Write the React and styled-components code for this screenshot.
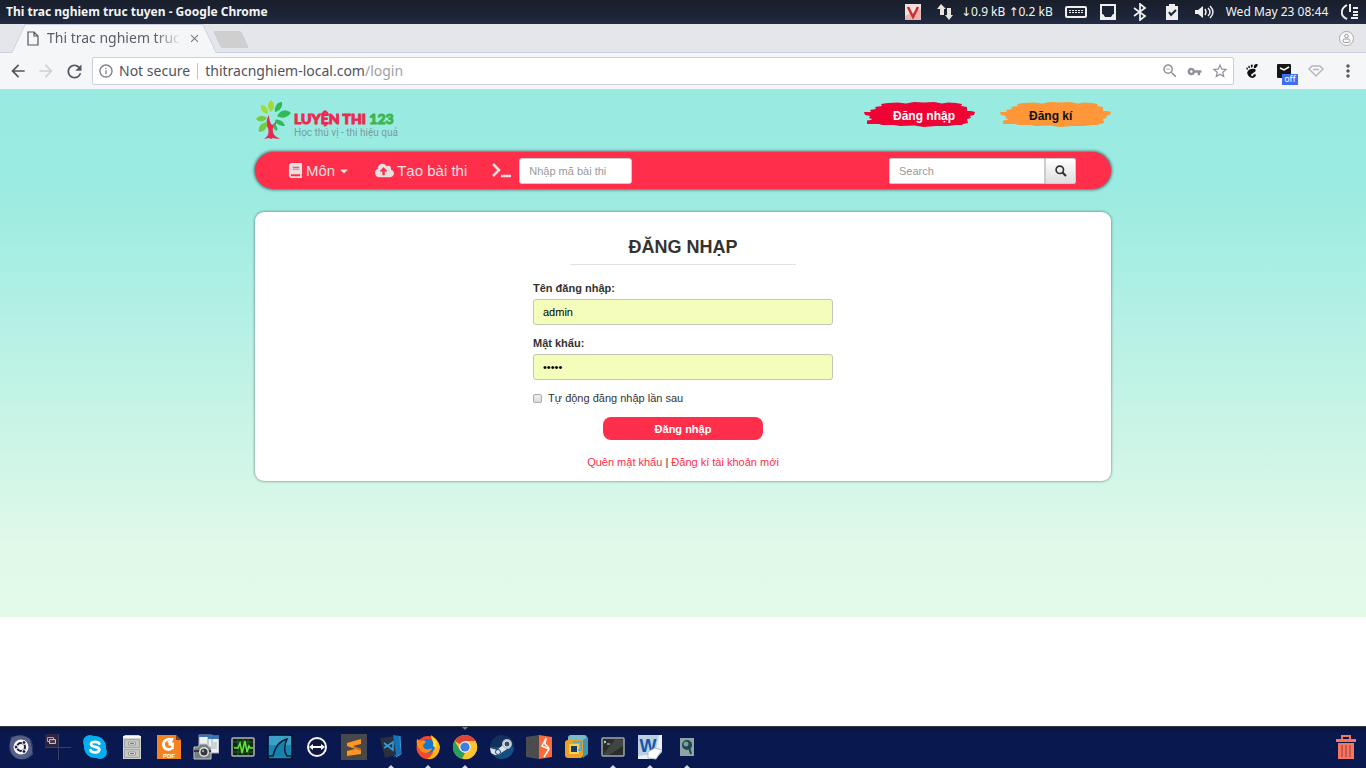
import React from "react";
import styled, { createGlobalStyle, css } from "styled-components";
import { FaBook, FaCloudUploadAlt, FaCaretDown } from "react-icons/fa";
import {
  MdArrowBack, MdArrowForward, MdRefresh, MdInfoOutline, MdZoomOut, MdVpnKey,
  MdStarBorder, MdMoreVert, MdClose,
} from "react-icons/md";
import { SiGnome } from "react-icons/si";

const ui = `"Noto Sans", "Open Sans", "DejaVu Sans", sans-serif`;
const web = `"Liberation Sans", Arial, sans-serif`;
const red = "#ff2f4b";

const GlobalStyle = createGlobalStyle`
  *, *::before, *::after { box-sizing: border-box; }
  body { margin: 0; background: #fff; font-family: ${web}; }
  button, input { font-family: inherit; margin: 0; }
  svg { display: block; flex: none; }
`;

const Desktop = styled.div`
  min-height: 100vh;
  display: flex;
  flex-direction: column;
`;

/* ---------- system panel ---------- */
const SystemBar = styled.header`
  height: 24px;
  display: flex;
  align-items: center;
  justify-content: space-between;
  background: linear-gradient(#191e2b, #1b2436 60%, #232c42);
  color: #f4f4f2;
  font: 12px/24px ${ui};
  white-space: nowrap;
`;
const WindowTitle = styled.span`
  padding-left: 6px;
  font-weight: 700;
`;
const Indicators = styled.div`
  display: flex;
  align-items: center;
`;
const Indicator = styled.span`
  width: 32px;
  display: flex;
  justify-content: center;
  align-items: center;
`;
const NetSpeed = styled.span`
  width: 99px;
`;
const Clock = styled.time`
  width: 114px;
  text-align: center;
`;

/* ---------- browser chrome ---------- */
const TabStrip = styled.div`
  height: 29px;
  display: flex;
  align-items: center;
  padding: 0 12px 0 11px;
  background: #e5e6e9;
  border-bottom: 1px solid #c9cee3;
`;
const tabSide = css`
  content: "";
  position: absolute;
  z-index: -1;
  top: 0;
  bottom: -1px;
  background: #f5f6f8;
  border-top: 1px solid #c9cee3;
`;
const Tab = styled.div`
  position: relative;
  z-index: 0;
  width: 206px;
  height: 28px;
  display: flex;
  align-items: center;
  padding: 0 16px;
  color: #5b5e68;
  font: 14px/28px ${ui};
  &::before {
    ${tabSide}
    left: 7px;
    right: 50%;
    border-left: 1px solid #c9cee3;
    transform: skewX(-25deg);
  }
  &::after {
    ${tabSide}
    right: 7px;
    left: 30%;
    border-right: 1px solid #c9cee3;
    transform: skewX(25deg);
  }
`;
const TabTitle = styled.span`
  flex: 1;
  min-width: 0;
  margin: 0 6px 0 8px;
  overflow: hidden;
  white-space: nowrap;
  mask-image: linear-gradient(90deg, #000 80%, transparent);
`;
const BareButton = styled.button`
  display: flex;
  align-items: center;
  justify-content: center;
  padding: 0;
  border: 0;
  background: none;
  color: ${(p) => p.$color || "#54565f"};
`;
const NewTab = styled.button`
  width: 28px;
  height: 17px;
  padding: 0;
  border: 1px solid #c9cde0;
  border-radius: 2px;
  background: #cfcfcf;
  transform: skewX(25deg);
  margin: 2px auto 0 0;
`;
const Toolbar = styled.div`
  height: 36px;
  display: flex;
  align-items: center;
  background: #f5f6f8;
  padding: 0 2px 0 4px;
`;
const ToolButton = styled(BareButton)`
  width: ${(p) => p.$width || 28}px;
  height: 28px;
`;
const AddressBox = styled.div`
  flex: 1;
  height: 28px;
  display: flex;
  align-items: center;
  margin: 0 2px 0 4px;
  padding: 0 1px 0 5px;
  background: #fff;
  border: 1px solid #c9cee3;
  border-radius: 2px;
  font: 14px/26px ${ui};
  color: #50535c;
  white-space: nowrap;
`;
const Security = styled.span`
  display: flex;
  align-items: center;
  gap: 5px;
`;
const Divider = styled.span`
  width: 1px;
  height: 16px;
  margin: 0 7px;
  background: #c4c5ca;
`;
const Url = styled.span`
  flex: 1;
  span { color: #a09fa4; }
`;
const Extension = styled(ToolButton)`
  position: relative;
`;
const OffBadge = styled.span`
  position: absolute;
  right: 2px;
  bottom: 0;
  width: 16px;
  height: 11px;
  background: #3f6ff0;
  color: #fff;
  font: 9px/10px ${ui};
  text-align: center;
`;

/* ---------- web page ---------- */
const Page = styled.main`
  flex: 1;
  background: #fff;
`;
const Backdrop = styled.div`
  padding: 0 16px 136px;
  background: linear-gradient(#99ebe1, #9aebe1 18%, #e0f9e9 86%, #e3fae9);
`;
const Container = styled.div`
  max-width: 856px;
  margin: 0 auto;
`;
const SiteHeader = styled.header`
  height: 63px;
  display: flex;
  justify-content: space-between;
  align-items: flex-start;
  padding-top: 10px;
`;
const Brand = styled.a`
  display: flex;
  text-decoration: none;
  gap: 3px;
`;
const BrandText = styled.span`
  display: flex;
  flex-direction: column;
  padding-top: 11px;
  white-space: nowrap;
`;
const BrandName = styled.span`
  font: 900 14px/17px Lato, Inter, sans-serif;
  color: #f02850;
  -webkit-text-stroke: 1px currentColor;
  span { color: #3eb650; }
`;
const Slogan = styled.span`
  font: 10px/12px Roboto, sans-serif;
  color: #779d9f;
`;
const Account = styled.div`
  display: flex;
  gap: 25px;
`;
const BrushButton = styled.button`
  display: grid;
  align-items: center;
  justify-items: start;
  width: 111px;
  height: 28px;
  padding: 0;
  border: 0;
  background: none;
  color: ${(p) => p.$ink};
  font-size: 12px;
  font-weight: 700;
  & > * { grid-area: 1 / 1; }
  & > span { padding: 5px 0 0 29px; }
`;
const NavBar = styled.nav`
  height: 37px;
  display: flex;
  align-items: center;
  padding: 0 35px 0 33px;
  background: ${red};
  border-radius: 19px;
  box-shadow: 0 0 3px 1px rgba(40, 60, 65, 0.7);
`;
const NavLink = styled.a`
  display: flex;
  align-items: center;
  gap: 3px;
  margin-right: 25px;
  color: #e6e0e1;
  font-size: 15px;
  line-height: 20px;
  text-decoration: none;
  white-space: nowrap;
`;
const fieldBase = css`
  height: 26px;
  padding: 0 9px;
  border: 1px solid #ccc;
  font-size: 11px;
  color: #222;
  &::placeholder { color: #999; opacity: 1; }
`;
const CodeInput = styled.input`
  ${fieldBase}
  width: 113px;
  margin-left: 7px;
  border-radius: 3px;
`;
const SearchForm = styled.form`
  display: flex;
  margin-left: auto;
`;
const SearchInput = styled.input`
  ${fieldBase}
  width: 156px;
  border-radius: 2px 0 0 2px;
`;
const SearchButton = styled.button`
  width: 31px;
  height: 26px;
  display: flex;
  align-items: center;
  justify-content: center;
  padding: 0;
  border: 1px solid #ccc;
  border-radius: 0 2px 2px 0;
  background: linear-gradient(#fff, #dedede);
  color: #333;
`;
const Panel = styled.section`
  margin-top: 23px;
  padding: 21px 16px 11px;
  display: flex;
  flex-direction: column;
  align-items: center;
  background: #fff;
  border-radius: 9px;
  box-shadow: 0 0 3px rgba(40, 60, 65, 0.7);
`;
const Heading = styled.h1`
  width: 226px;
  margin: 0 0 15px;
  padding-bottom: 3px;
  border-bottom: 1px solid #e2e2e2;
  color: #333;
  font-size: 18px;
  line-height: 28px;
  text-align: center;
`;
const LoginForm = styled.form`
  width: 300px;
  max-width: 100%;
  display: flex;
  flex-direction: column;
  color: #333;
  font-size: 11px;
  line-height: 16px;
`;
const Label = styled.label`
  margin-bottom: 3px;
  font-weight: 700;
`;
const FilledInput = styled.input`
  ${fieldBase}
  margin-bottom: 10px;
  border-radius: 3px;
  border-color: #c3c7b4;
  background: #f5fdbb;
  color: #000;
`;
const Remember = styled.label`
  display: flex;
  align-items: center;
  gap: 6px;
  margin-bottom: 11px;
`;
const Checkbox = styled.input`
  appearance: none;
  width: 9px;
  height: 9px;
  border: 1px solid #aaa;
  border-radius: 2px;
  background: linear-gradient(#eee, #ddd);
`;
const Submit = styled.button`
  align-self: center;
  width: 160px;
  height: 23px;
  padding: 0;
  border: 0;
  border-radius: 8px;
  background: ${red};
  color: #fff;
  font-size: 11px;
  font-weight: 700;
`;
const Links = styled.p`
  margin: 14px 0 0;
  text-align: center;
  a { color: ${red}; text-decoration: none; }
`;

/* ---------- dock ---------- */
const Dock = styled.footer`
  height: 42px;
  display: flex;
  align-items: stretch;
  padding: 0 2px;
  border-top: 1px solid #343845;
  background: linear-gradient(#0b1439, #0a1850 18%, #0a1850);
`;
const DockItem = styled.button`
  position: relative;
  width: 37px;
  display: flex;
  align-items: center;
  justify-content: center;
  padding: 0 0 2px;
  border: 0;
  background: none;
  &:last-child { margin-left: auto; }
`;
const Marker = styled.span`
  position: absolute;
  left: 50%;
  margin-left: -3px;
  ${(p) => (p.$top ? "top: 0; border-top: 3px solid #777b80;" : "bottom: 0; border-bottom: 3px solid #d8dadf;")}
  border-left: 3px solid transparent;
  border-right: 3px solid transparent;
`;

const Svg = ({ size = 26, box = 26, children }) => (
  <svg width={size} height={size} viewBox={`0 0 ${box} ${box}`} fill="none" aria-hidden="true">
    {children}
  </svg>
);

const dockIcons = [
  ["Ubuntu", <>
    <circle cx="13" cy="13" r="12" fill="#646c91" opacity=".4" />
    <path d="M3 3Q13-1 22 5L25 20Q20 27 10 25Q-1 20 3 3Z" fill="#858ba8" opacity=".45" />
    <circle cx="13" cy="13" r="7.500" fill="#f8f8fa" />
    <circle cx="13" cy="13" r="4" stroke="#171d3b" strokeWidth="2" />
    <g fill="#171d3b" stroke="#f8f8fa"><circle cx="8" cy="13" r="1.900" /><circle cx="16" cy="8.500" r="1.900" /><circle cx="16" cy="17.500" r="1.900" /></g>
  </>],
  ["Workspaces", <>
    <path d="M0 0h13v13H0z" fill="#30243f" />
    <path d="M13.500 0v26M0 13.500h26" stroke="#3b4162" />
    <path d="M2.500 3.500h6v4h-6z" stroke="#aaa7b1" /><path d="M4.500 5.500h6v4h-6z" fill="#484050" stroke="#c6c3c8" />
  </>],
  ["Skype", <>
    <circle cx="8" cy="8" r="7" fill="#04aeef" /><circle cx="18" cy="18" r="7" fill="#04aeef" /><circle cx="13" cy="13" r="11" fill="#04aeef" />
    <path d="M17.300 9.700C16.500 7.500 9 6.700 9 10.300c0 3.500 8.300 1.800 8.300 5.300 0 3.800-7.500 3.600-8.800.700" stroke="#fff" strokeWidth="2.800" strokeLinecap="round" />
  </>],
  ["Files", <>
    <path d="M4 3 6 1h14l2 2v22H4z" fill="#d0d2cd" /><path d="M4 3h18" stroke="#f5f5f2" strokeWidth="2" />
    <path d="M5.500 5.500h15v8h-15zM5.500 15.500h15v8h-15z" fill="#c3c6c1" stroke="#a3a6a2" />
    <path d="M9.500 8h7v3h-7zM9.500 18h7v3h-7z" fill="#eee" stroke="#999" /><path d="M11 9.500h4M11 19.500h4" stroke="#777" />
  </>],
  ["Foxit Reader", <>
    <path d="M1 1h19l5 5v19H1z" fill="#f58220" /><path d="M20 1v5h5" fill="#7e3c11" />
    <path d="M17 5.500C11 4 7 7 7.500 11c.5 4 5 6 9 3v-4h-4" stroke="#fff" strokeWidth="2.800" /><path d="M11 8 18 4l-3 6z" fill="#fff" />
    <text x="13" y="24" textAnchor="middle" fontFamily="Liberation Sans, sans-serif" fontWeight="700" fontSize="6" fill="#fff">PDF</text>
  </>],
  ["Screenshot", <>
    <path d="M6 1h13v12H6zM15 2h11v17H15z" fill="#edf0f0" stroke="#9aa5ae" /><path d="M6 1h13v2H6zM15 2h11v3H15z" fill="#3c73b5" /><path d="M18 8h6v7h-6" fill="#ccd2d7" />
    <path d="M1 13h4l2-3h7l2 3h2v12H1z" fill="#777e7f" stroke="#c5c9c8" /><path d="M1 16h17v2H1z" fill="#363a3c" />
    <circle cx="11" cy="18" r="5" fill="#e3e5e4" /><circle cx="11" cy="18" r="3.500" fill="#31383f" /><circle cx="10" cy="17" r="1.200" fill="#94a3ad" />
  </>],
  ["System Monitor", <>
    <rect x="2" y="4" width="22" height="18" rx="1" fill="#112316" stroke="#b4b6ac" strokeWidth="1.500" />
    <path d="M3 8h20M3 13h20M3 18h20M8 5v16M13 5v16M18 5v16" stroke="#1f6622" />
    <path d="M4 14h4l2-5 2 10 3-12 2 11 2-6 1 2h3" stroke="#66e53b" strokeWidth="1.500" />
  </>],
  ["Wireshark", <>
    <rect x="1" y="1" width="24" height="24" rx="2" fill="#1787b7" stroke="#04132a" strokeWidth="1.500" />
    <path d="M2 2h22v9H2z" fill="#3d9fc5" /><path d="M2 22h4C8 13 12 7 20 5c-3 7-3 13 0 17h4" fill="#1681ad" stroke="#061c33" strokeWidth="1.500" />
  </>],
  ["TeamViewer", <>
    <circle cx="13" cy="13" r="9" fill="#10183d" stroke="#f5f5f7" strokeWidth="2" /><path d="m5 13 4-3v2h8v-2l4 3-4 3v-2H9v2z" fill="#fff" />
  </>],
  ["Sublime Text", <>
    <path d="M0 0h26v26H0z" fill="#47484a" /><path d="m6 9 14-4v5l-8 2 8 3v5L6 22v-5l8-2-8-3z" fill="#ff9524" /><path d="m12 12 8 3v2l-8-3z" fill="#d16d0f" />
  </>],
  ["Visual Studio Code", <>
    <path d="m2 4 16-2 4 18L7 24z" fill="#29313a" /><path d="M15 1 22 2v19l-7 2 3-3z" fill="#1474ba" /><path d="m22 2 1 18-5 3" stroke="#3b9dde" />
    <path d="m6 9 9 7V8l-9 6" stroke="#359bdb" strokeWidth="1.600" />
  </>],
  ["Firefox", <>
    <circle cx="13" cy="13.500" r="11.500" fill="#f5472a" /><path d="M16 1c4 3 7 5 9 12-1 9-7 13-13 12 8-4 8-12 4-24z" fill="#ffb41d" />
    <circle cx="13" cy="12" r="7" fill="#1777cf" /><path d="M2 5c1 1 3 1 4 2 2-1 5 0 5 1l-3 3c0 4 4 6 9 3-1 5-8 7-12 2C2 13 1 9 2 5z" fill="#ff8c16" /><path d="M16 2c5 3 7 7 5 12l-3-2c1-4-1-6-2-10z" fill="#ffe134" />
  </>],
  ["Google Chrome", <>
    <circle cx="13" cy="13" r="12" fill="#fbc52f" /><path d="M13 13 2.600 7A12 12 0 0 1 23.400 7L13 7z" fill="#dc4636" /><path d="M2.600 7 8 16l5 3-3 5.700A12 12 0 0 1 2.600 7z" fill="#299f5a" /><path d="M13 7h10.400A12 12 0 0 1 11 25l6-9z" fill="#fbc52f" />
    <circle cx="13" cy="13" r="5.800" fill="#f4f4f2" /><circle cx="13" cy="13" r="4.600" fill="#407de5" />
  </>],
  ["Steam", <>
    <circle cx="13" cy="13" r="12" fill="#12305a" /><path d="M1 13h24A12 12 0 0 1 1 13z" fill="#14507f" /><path d="m1 14 7 2 6-5 4 4-6 4-2 2-4 0-4-2z" fill="#e0e4ea" />
    <circle cx="18" cy="10" r="5" fill="#b9c3d0" /><circle cx="18" cy="10" r="3" fill="#34506f" stroke="#dfe4ea" /><circle cx="9" cy="18" r="2.500" stroke="#21466c" />
  </>],
  ["Burp Suite", <>
    <path d="m0 3 13-2v24L0 23z" fill="#4c4c4e" /><path d="m13 1 13 2v20l-13 2z" fill="#ff6937" /><path d="m20 4-4 8 7 3-5 8M20 4l-1 6 4 4" stroke="#fff" strokeWidth="1.500" />
  </>],
  ["VMware", <>
    <rect x="5" y="1" width="19" height="19" rx="3" fill="#78b9ca" /><path d="m20 6 5-3v17l-5 4z" fill="#4196b5" /><rect x="2" y="6" width="18" height="18" rx="3" fill="#e9a129" /><path d="M7 11h8v8H7z" fill="#163969" stroke="#ffcf50" strokeWidth="2" /><path d="M10 8h8v8h-3" stroke="#60abc1" strokeWidth="2" />
  </>],
  ["Terminal", <>
    <rect x="2" y="4" width="22" height="18" rx="1" fill="#292e2c" stroke="#a4a7a1" strokeWidth="1.500" /><path d="m15 5 8 1v6L9 21H3z" fill="#4d534e" opacity=".65" /><path d="m4 7 2 1-2 1M7 10h3" stroke="#e2e4e1" />
  </>],
  ["Word", <>
    <path d="M1 1h24v17l-7 7H1z" fill="#eaf0f6" /><path d="M1 1h21l-4 19-17 2z" fill="#2b67ae" opacity=".25" />
    <text x="11" y="18" textAnchor="middle" fontFamily="Liberation Sans, sans-serif" fontSize="18" fontWeight="700" fill="#1558a5">W</text><path d="m11 18 7-4 7 2-6 9-8-1z" fill="#fff" stroke="#a8bdd1" />
  </>],
  ["Image Viewer", <>
    <path d="M6 4h14v18H6z" fill="#8fa5a3" /><circle cx="13" cy="11" r="5" fill="#1d4651" /><circle cx="12" cy="10" r="2.500" fill="#7c9c9d" /><path d="m15 13 2 7" stroke="#1d4651" strokeWidth="2" />
  </>],
];
const running = new Set(["Visual Studio Code", "Firefox", "Google Chrome", "Terminal", "Word", "Image Viewer"]);

const Brush = ({ color }) => (
  <svg width="111" height="28" viewBox="0 0 111 28" aria-hidden="true">
    <path fill={color} d="M0 13 1 16 6 17 5 19 8 20 7 21 3 21.500 3 25 15 25 18 26 30 26 36 27 50 26.500 60 28 72 27 84 27 92 26 98 26 99 25 104 24 103 20 107 19 106 17 110 16 111 13 107 12 103 12 103 8 97 7 98 5 92 4 84 3.500 78 4.500 70 3 60 3.500 50 3 42 4.500 34 3.500 24 4 17 5 18 7 11 8 12 10 6 11 7 13Z" />
  </svg>
);

const Tree = () => (
  <svg width="36" height="42" viewBox="0 0 36 42" aria-hidden="true">
    <path fill="#e9294f" d="M14 16c0 4 1 8 3 10 2-1 4-3 5-6 0 4-2 7-4 9-1 5 1 8 7 11-4 0-6-1-7-1l-2 1-2-1-5 1c5-3 5-7 4-11-2-3-2-8 1-13z" />
    <g fill="#a5d83a"><path d="M16 1c4 4 4 8 0 12-4-4-4-9 0-12zM6 6c5 0 7 4 7 9-5-1-8-4-7-9z" /></g>
    <g fill="#74cc45"><path d="M1 20c3-4 7-4 11-1-3 4-7 5-11 1zM4 33c-1-6 2-9 8-10 1 6-3 10-8 10z" /></g>
    <g fill="#30ba5a"><path d="M27 3c1 5-2 9-7 10-1-5 2-10 7-10zM22 17c3-6 9-8 14-3-4 5-9 6-14 3zM20 21c5-1 9 2 10 6-5 0-9-2-10-6zM18 25c4 1 5 4 4 7-3-1-4-4-4-7z" /></g>
  </svg>
);

const SystemIndicators = () => (
  <Indicators>
    <Indicator><Svg size={16} box={16}><path d="M0 0h16v16H0z" fill="#edb5b2" /><path d="M0 0h16v5L0 12z" fill="#f5dedb" /><path d="m3 3 5 10 5-10" stroke="#c93036" strokeWidth="2.500" /></Svg></Indicator>
    <Indicator><Svg size={18} box={18}><path fill="#e8e4dc" d="M5 1 1 6h3v6h4V6h2zM13 17l-4-5h2V5h4v7h2z" /></Svg></Indicator>
    <NetSpeed>↓0.9 kB ↑0.2 kB</NetSpeed>
    <Indicator><svg width="22" height="14" viewBox="0 0 22 14" fill="none"><rect x="1" y="2" width="20" height="10" rx="1" stroke="#eee" strokeWidth="2" /><path d="M4 5.500h14M4 7.500h14" stroke="#eee" strokeDasharray="2 1" /></svg></Indicator>
    <Indicator><Svg size={18} box={18}><path d="M1 1h16v16H1z" fill="#eee" /><path d="M3 3h12v8h-1l-2 3H6l-2-3H3z" fill="#1b2436" /></Svg></Indicator>
    <Indicator><Svg size={18} box={18}><path d="m3 5 11 8-5 4V1l5 4-11 8" stroke="#eee" strokeWidth="1.800" /></Svg></Indicator>
    <Indicator><Svg size={16} box={16}><path fill="#eee" d="M2 2h3V0h6v2h3v14H2z" /><path d="m5 8 2 3 5-5" stroke="#1b2436" strokeWidth="2" /></Svg></Indicator>
    <Indicator><svg width="21" height="16" viewBox="0 0 21 16" fill="none"><path fill="#eee" d="M1 6h3l5-4v12l-5-4H1z" /><path d="M11 5q2 3 0 6M14 4q4 4 0 8M16 2q6 6 0 12" stroke="#eee" strokeWidth="1.500" /></svg></Indicator>
    <Clock>Wed May 23 08:44</Clock>
    <Indicator><Svg size={18} box={18}><path d="M6 2C-1 6-1 13 6 16M9 1v8M12 5h5M12 9h5M12 12h5M10 15h7" stroke="#eee" strokeWidth="2" /></Svg></Indicator>
  </Indicators>
);

export default function App() {
  return (
    <Desktop>
      <GlobalStyle />
      <SystemBar>
        <WindowTitle>Thi trac nghiem truc tuyen - Google Chrome</WindowTitle>
        <SystemIndicators />
      </SystemBar>

      <TabStrip>
        <Tab>
          <svg width="12" height="15" viewBox="0 0 12 15" fill="none" aria-hidden="true"><path d="M1 1h6l4 4v9H1zM7 1v4h4" stroke="#54565f" strokeWidth="1.200" /></svg>
          <TabTitle>Thi trac nghiem truc tuyen</TabTitle>
          <BareButton aria-label="Close tab" $color="#777a82"><MdClose size={13} /></BareButton>
        </Tab>
        <NewTab aria-label="New tab" />
        <BareButton aria-label="Profile">
          <Svg size={15} box={15}><circle cx="7.500" cy="7.500" r="7" fill="#fafafa" stroke="#a7a7a9" /><circle cx="7.500" cy="5" r="1.800" stroke="#99999c" /><rect x="4" y="8" width="7" height="3.500" rx="1.700" stroke="#99999c" /></Svg>
        </BareButton>
      </TabStrip>
      <Toolbar>
        <ToolButton aria-label="Back"><MdArrowBack size={20} /></ToolButton>
        <ToolButton aria-label="Forward" $color="#d0d1d4"><MdArrowForward size={20} /></ToolButton>
        <ToolButton aria-label="Reload"><MdRefresh size={21} /></ToolButton>
        <AddressBox>
          <Security><MdInfoOutline size={16} color="#7c7f88" />Not secure</Security>
          <Divider />
          <Url>thitracnghiem-local.com<span>/login</span></Url>
          <ToolButton aria-label="Zoom" $width={25} $color="#8f9199"><MdZoomOut size={18} /></ToolButton>
          <ToolButton aria-label="Passwords" $width={25} $color="#8f9199"><MdVpnKey size={15} /></ToolButton>
          <ToolButton aria-label="Bookmark" $width={25} $color="#8f9199"><MdStarBorder size={18} /></ToolButton>
        </AddressBox>
        <Extension aria-label="GNOME Shell" $width={32} $color="#111"><SiGnome size={14} /></Extension>
        <Extension aria-label="Mail" $width={32}>
          <Svg size={16} box={16}><rect x="1" y="1" width="14" height="14" rx="1" fill="#171717" /><path d="m4 5 4 2 5-3" stroke="#fff" strokeWidth="1.500" /></Svg>
          <OffBadge>off</OffBadge>
        </Extension>
        <Extension aria-label="Extension" $width={32}>
          <Svg size={16} box={16}><path d="M4 3h8l3 3-7 7-7-7zM5 6.500h6" stroke="#b7b7b9" strokeWidth="1.500" /></Svg>
        </Extension>
        <ToolButton aria-label="Menu" $width={32}><MdMoreVert size={20} /></ToolButton>
      </Toolbar>

      <Page>
        <Backdrop>
          <Container>
            <SiteHeader>
              <Brand href="#">
                <Tree />
                <BrandText>
                  <BrandName>LUYỆN THI <span>123</span></BrandName>
                  <Slogan>Học thú vị - thi hiệu quả</Slogan>
                </BrandText>
              </Brand>
              <Account>
                <BrushButton $ink="#fff"><Brush color="#ef0334" /><span>Đăng nhập</span></BrushButton>
                <BrushButton $ink="#111"><Brush color="#ff9638" /><span>Đăng kí</span></BrushButton>
              </Account>
            </SiteHeader>
            <NavBar>
              <NavLink href="#"><FaBook size={15} />Môn<FaCaretDown size={12} /></NavLink>
              <NavLink href="#"><FaCloudUploadAlt size={19} />Tạo bài thi</NavLink>
              <svg width="20" height="16" viewBox="0 0 20 16" fill="none" aria-hidden="true"><path d="m1 1 6 6-6 6M9 13h10" stroke="#e6e0e1" strokeWidth="2.500" /></svg>
              <CodeInput aria-label="Mã bài thi" placeholder="Nhập mã bài thi" />
              <SearchForm>
                <SearchInput aria-label="Search" placeholder="Search" />
                <SearchButton type="button" aria-label="Search">
                  <Svg size={12} box={12}><circle cx="4.800" cy="4.800" r="3.700" stroke="currentColor" strokeWidth="1.700" /><path d="m7.500 7.500 3.500 3.500" stroke="currentColor" strokeWidth="2.200" /></Svg>
                </SearchButton>
              </SearchForm>
            </NavBar>
            <Panel>
              <Heading>ĐĂNG NHẠP</Heading>
              <LoginForm>
                <Label htmlFor="username">Tên đăng nhập:</Label>
                <FilledInput id="username" defaultValue="admin" />
                <Label htmlFor="password">Mật khẩu:</Label>
                <FilledInput id="password" type="password" defaultValue="admin" />
                <Remember><Checkbox type="checkbox" />Tự động đăng nhập lần sau</Remember>
                <Submit type="button">Đăng nhập</Submit>
                <Links><a href="#">Quên mật khẩu</a> | <a href="#">Đăng kí tài khoản mới</a></Links>
              </LoginForm>
            </Panel>
          </Container>
        </Backdrop>
      </Page>

      <Dock>
        {dockIcons.map(([name, art]) => (
          <DockItem key={name} aria-label={name}>
            <Svg>{art}</Svg>
            {name === "Google Chrome" && <Marker $top />}
            {running.has(name) && <Marker />}
          </DockItem>
        ))}
        <DockItem aria-label="Trash">
          <Svg><path d="M9 5V2h8v3" stroke="#f5765f" strokeWidth="2" /><path d="M3 5h20v3H3zM5 9h16v16H5z" fill="#f5765f" /><path d="M9 11v12M13 11v12M17 11v12" stroke="#b94f48" strokeWidth="1.500" /></Svg>
        </DockItem>
      </Dock>
    </Desktop>
  );
}
